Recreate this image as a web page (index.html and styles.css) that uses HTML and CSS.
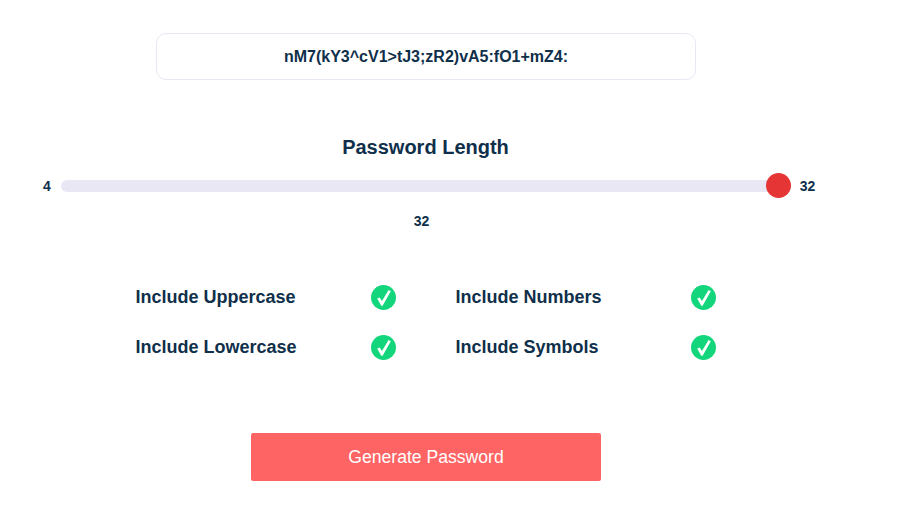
FILE: index.html
```html
<!DOCTYPE html>
<html>
<head>
  <meta name="viewport" content="width=device-width, initial-scale=1.0">
  <link rel="stylesheet" href="styles.css">
</head>
<body>
  <div class="container">
    <div class="password-box">nM7(kY3^cV1&gt;tJ3;zR2)vA5:fO1+mZ4:</div>

    <h2 class="length-title">Password Length</h2>
    <div class="slider-row">
      <span class="slider-label">4</span>
      <div class="slider-track"><div class="slider-thumb"></div></div>
      <span class="slider-label">32</span>
    </div>
    <div class="slider-value">32</div>

    <div class="options">
      <div class="option">
        <span>Include Uppercase</span>
        <svg class="check" viewBox="0 0 25 25"><circle cx="12.5" cy="12.5" r="12.5" fill="#13d67c"/><path d="M6.2 13.6 L8.6 12.4 L11 16 L17.6 5 L19.8 6.2 L11.6 20.8 L10.2 20.8 Z" fill="#fff"/></svg>
      </div>
      <div class="option">
        <span>Include Numbers</span>
        <svg class="check" viewBox="0 0 25 25"><circle cx="12.5" cy="12.5" r="12.5" fill="#13d67c"/><path d="M6.2 13.6 L8.6 12.4 L11 16 L17.6 5 L19.8 6.2 L11.6 20.8 L10.2 20.8 Z" fill="#fff"/></svg>
      </div>
      <div class="option">
        <span>Include Lowercase</span>
        <svg class="check" viewBox="0 0 25 25"><circle cx="12.5" cy="12.5" r="12.5" fill="#13d67c"/><path d="M6.2 13.6 L8.6 12.4 L11 16 L17.6 5 L19.8 6.2 L11.6 20.8 L10.2 20.8 Z" fill="#fff"/></svg>
      </div>
      <div class="option">
        <span>Include Symbols</span>
        <svg class="check" viewBox="0 0 25 25"><circle cx="12.5" cy="12.5" r="12.5" fill="#13d67c"/><path d="M6.2 13.6 L8.6 12.4 L11 16 L17.6 5 L19.8 6.2 L11.6 20.8 L10.2 20.8 Z" fill="#fff"/></svg>
      </div>
    </div>

    <button class="generate-btn">Generate Password</button>
  </div>
</body>
</html>
```

FILE: styles.css
```css
body {
  margin: 0;
  background: #ffffff;
  color: #0f2f4a;
  font-family: "Liberation Sans", Arial, sans-serif;
}

.container {
  width: 899px;
  height: 512px;
  padding-top: 33px;
  box-sizing: border-box;
}

.password-box {
  width: 540px;
  height: 47px;
  margin-left: 156px;
  box-sizing: border-box;
  border: 1px solid #e9e7f3;
  border-radius: 10px;
  font-size: 16px;
  font-weight: bold;
  line-height: 45px;
  text-align: center;
}

.length-title {
  margin: 54px 0 0 0;
  height: 26px;
  font-size: 20px;
  line-height: 26px;
  text-align: center;
  width: 851px;
}

.slider-row {
  display: flex;
  align-items: center;
  height: 26px;
  margin-top: 13px;
  padding-left: 43px;
}

.slider-label {
  font-size: 14px;
  font-weight: bold;
}

.slider-track {
  position: relative;
  width: 730.5px;
  height: 12px;
  margin: 0 8.5px 0 10px;
  background: #e9e7f3;
  border-radius: 6px;
}

.slider-thumb {
  position: absolute;
  right: 0;
  top: -7px;
  width: 25px;
  height: 25px;
  border-radius: 50%;
  background: #e53535;
}

.slider-value {
  margin-top: 14px;
  width: 843px;
  font-size: 14px;
  font-weight: bold;
  line-height: 16px;
  text-align: center;
}

.options {
  display: grid;
  grid-template-columns: 260.5px 260.5px;
  column-gap: 59.5px;
  row-gap: 25px;
  margin: 56px 0 0 135.5px;
}

.option {
  display: flex;
  align-items: center;
  justify-content: space-between;
  height: 25px;
  font-size: 18px;
  font-weight: bold;
}

.check {
  width: 25px;
  height: 25px;
}

.generate-btn {
  display: block;
  width: 350px;
  height: 48px;
  margin: 73px 0 0 251px;
  border: none;
  border-radius: 2px;
  background: #ff6464;
  color: #ffffff;
  font-family: "Liberation Sans", Arial, sans-serif;
  font-size: 17.6px;
}
```
